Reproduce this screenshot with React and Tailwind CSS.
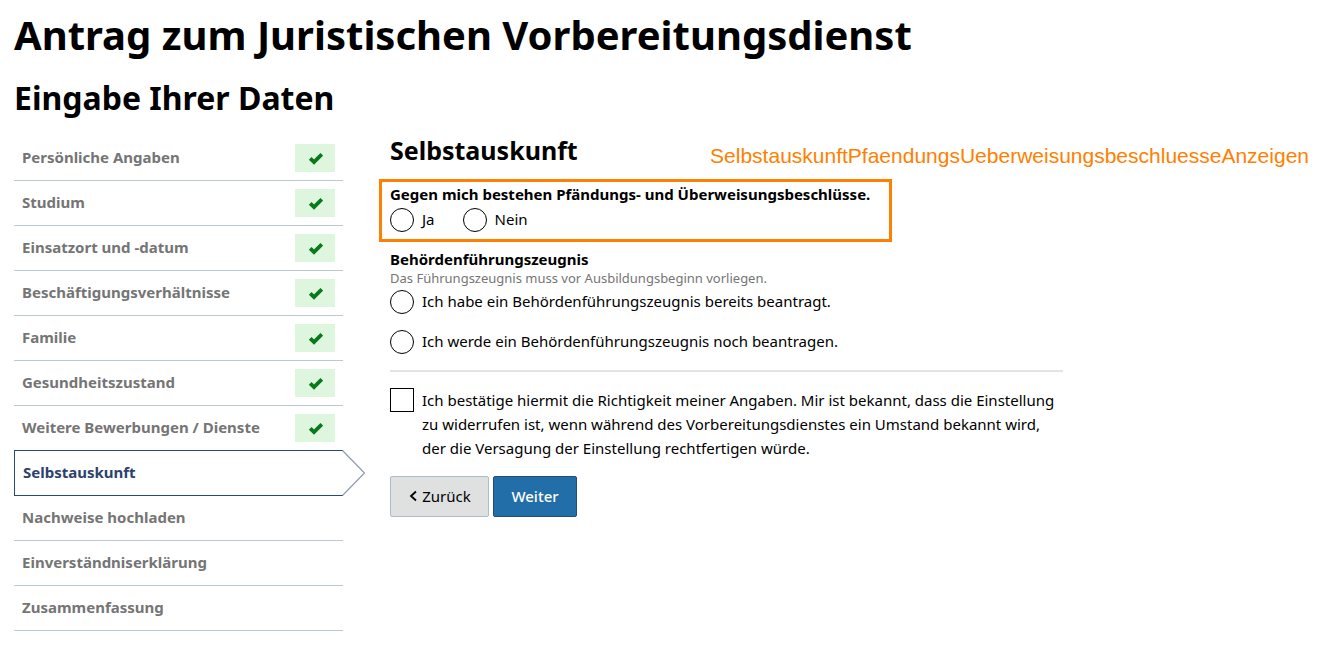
const steps = [
  { label: "Persönliche Angaben", done: true },
  { label: "Studium", done: true },
  { label: "Einsatzort und -datum", done: true },
  { label: "Beschäftigungsverhältnisse", done: true },
  { label: "Familie", done: true },
  { label: "Gesundheitszustand", done: true },
  { label: "Weitere Bewerbungen / Dienste", done: true },
  { label: "Selbstauskunft", current: true },
  { label: "Nachweise hochladen" },
  { label: "Einverständniserklärung" },
  { label: "Zusammenfassung" },
];

function Check() {
  return (
    <span className="flex h-7 w-10 items-center justify-center bg-[#def5de]">
      <svg viewBox="0 0 16 16" className="h-4 w-4" fill="none" stroke="#087a1c" strokeWidth="3.8" aria-hidden="true">
        <path d="M3.200 8.300 7 12.100 14.800 4.300" />
      </svg>
    </span>
  );
}

function Step({ step }) {
  if (step.current) {
    return (
      <li className="relative -mt-px">
        <a href="#" aria-current="step" className="flex h-[46px] items-center border border-r-0 border-[#2b4a72] pl-2 pb-0.5 text-[#2b4270]">
          {step.label}
        </a>
        <svg viewBox="0 0 24 46" className="absolute top-0 left-full -ml-px h-[46px] w-6" fill="none" stroke="#8f9ab0" strokeWidth="1.2" aria-hidden="true">
          <path d="M0.500 0.500 22.500 23 0.500 45.500" />
        </svg>
      </li>
    );
  }
  return (
    <li className="border-b border-[#bcc8d4]">
      <a href="#" className="flex h-11 items-center justify-between px-2 text-[#757575]">
        <span className="pb-0.5">{step.label}</span>
        {step.done && <Check />}
      </a>
    </li>
  );
}

function Radio({ name, label }) {
  return (
    <label className="flex h-6 items-center gap-2">
      <input type="radio" name={name} className="h-6 w-6 shrink-0 appearance-none rounded-full border border-black bg-white checked:border-8" />
      <span className="pb-0.5">{label}</span>
    </label>
  );
}

export default function App() {
  return (
    <main className="bg-white px-3.5 pt-2 text-base font-['Noto_Sans',sans-serif] text-black">
      <h1 className="text-[40px] leading-[54px] font-bold">Antrag zum Juristischen Vorbereitungsdienst</h1>
      <h2 className="mt-3.5 text-[32px] leading-[44px] font-bold">Eingabe Ihrer Daten</h2>
      <div className="mt-4 flex items-start">
        <nav className="w-[329px] shrink-0 text-[15px] font-bold" aria-label="Schritte">
          <ol>{steps.map((s) => <Step key={s.label} step={s} />)}</ol>
        </nav>
        <form className="ml-9 min-w-0 flex-1 text-[15px] leading-6">
          <div className="flex items-start justify-between pr-3">
            <h3 className="pl-[11px] text-[25px] leading-7 font-bold">Selbstauskunft</h3>
            <p className="mt-2 font-['Liberation_Sans',sans-serif] text-[21px] leading-6 text-[#ff8000]">SelbstauskunftPfaendungsUeberweisungsbeschluesseAnzeigen</p>
          </div>
          <fieldset className="mt-[11px] w-[513px] border-3 border-[#ff8000] px-2 pb-[7px]">
            <legend className="float-left w-full font-bold">Gegen mich bestehen Pfändungs- und Überweisungsbeschlüsse.</legend>
            <div className="clear-both flex gap-7 pt-0.5">
              <Radio name="beschluesse" label="Ja" />
              <Radio name="beschluesse" label="Nein" />
            </div>
          </fieldset>
          <div className="max-w-[684px] pl-[11px]">
            <fieldset className="mt-[7px]">
              <legend className="leading-5 font-bold">Behördenführungszeugnis</legend>
              <p className="pt-px text-[13px] leading-4 text-[#757575]">Das Führungszeugnis muss vor Ausbildungsbeginn vorliegen.</p>
              <div className="mt-1 flex flex-col gap-4">
                <Radio name="zeugnis" label="Ich habe ein Behördenführungszeugnis bereits beantragt." />
                <Radio name="zeugnis" label="Ich werde ein Behördenführungszeugnis noch beantragen." />
              </div>
            </fieldset>
            <hr className="mt-4 border-t-2 border-[#e3e3e3]" />
            <label className="mt-4 flex items-start gap-2">
              <input type="checkbox" className="h-6 w-6 shrink-0 appearance-none border border-black bg-white checked:bg-black" />
              <span>Ich bestätige hiermit die Richtigkeit meiner Angaben. Mir ist bekannt, dass die Einstellung zu widerrufen ist, wenn während des Vorbereitungsdienstes ein Umstand bekannt wird, der die Versagung der Einstellung rechtfertigen würde.</span>
            </label>
            <div className="mt-4 flex gap-1">
              <button type="button" className="flex h-[41px] w-[99px] items-center justify-center gap-1 rounded-xs border border-[#adbdc7] bg-[#dfe0e0] pb-0.5">
                <svg viewBox="0 0 10 12" className="h-3 w-2.5" fill="none" stroke="currentColor" strokeWidth="1.800" aria-hidden="true"><path d="M8 1.500 3 6 8 10.500" /></svg>
                Zurück
              </button>
              <button type="submit" className="h-[41px] w-21 rounded-xs border border-[#2b4a72] bg-[#226ea8] pb-0.5 font-medium text-white">Weiter</button>
            </div>
          </div>
        </form>
      </div>
    </main>
  );
}
